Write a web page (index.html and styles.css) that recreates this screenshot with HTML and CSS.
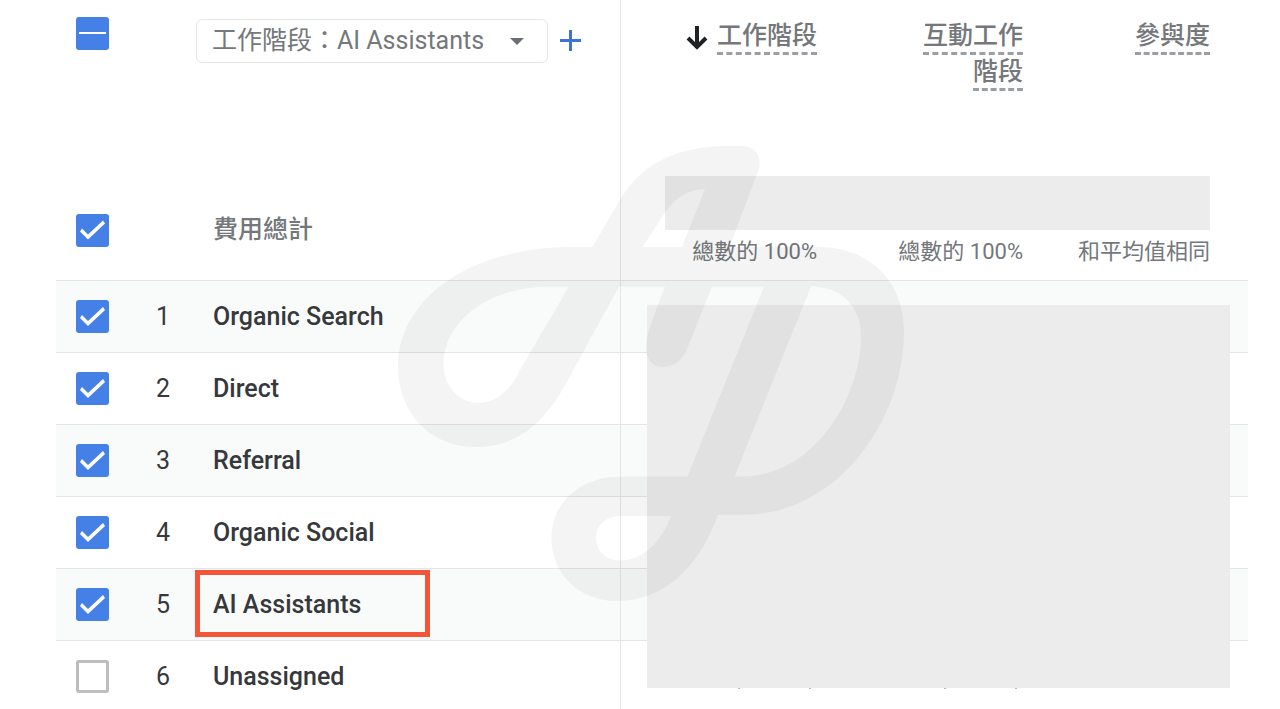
FILE: index.html
```html
<!DOCTYPE html>
<html lang="zh-Hant">
<head>
    <meta charset="UTF-8">
    <meta name="viewport" content="width=device-width, initial-scale=1.0">
    <title>工作階段</title>
    <link rel="stylesheet" href="styles.css">
</head>
<body>
    <div class="report">
        <table class="report-table">
            <colgroup>
                <col class="col-check">
                <col class="col-index">
                <col class="col-name">
                <col class="col-sessions">
                <col class="col-engaged">
                <col>
            </colgroup>
            <thead>
                <tr class="head-row">
                    <th class="check"><input type="checkbox" class="checkbox partial" aria-label="全選"></th>
                    <th colspan="2">
                        <div class="dimension">
                            <div class="select-box">
                                <select class="dimension-select" aria-label="維度">
                                    <option>工作階段：AI Assistants</option>
                                </select>
                                <svg class="caret" width="14" height="8" viewBox="0 0 14 8"><path d="M0 0h14L7 7z" fill="#6b6f74"/></svg>
                            </div>
                            <button type="button" class="add-button" aria-label="新增">
                                <svg width="21" height="21" viewBox="0 0 21 21"><path d="M10.500 0v21M0 10.500h21" stroke="#3b73d9" stroke-width="3"/></svg>
                            </button>
                        </div>
                    </th>
                    <th class="metric divider">
                        <div class="metric-head">
                            <svg class="sort-arrow" width="22" height="24" viewBox="0 0 22 24"><path d="M11 0v21M2 12l9 9 9-9" fill="none" stroke="#202124" stroke-width="4"/></svg>
                            <div class="metric-title"><span>工作階段</span></div>
                        </div>
                    </th>
                    <th class="metric">
                        <div class="metric-head">
                            <div class="metric-title"><span>互動工作階段</span></div>
                        </div>
                    </th>
                    <th class="metric">
                        <div class="metric-head">
                            <div class="metric-title"><span>參與度</span></div>
                        </div>
                    </th>
                </tr>
            </thead>
            <tbody>
                <tr class="total-row">
                    <td class="check"><input type="checkbox" class="checkbox" id="row-total" checked></td>
                    <td></td>
                    <td class="name"><label for="row-total">費用總計</label></td>
                    <td class="metric divider">總數的 100%</td>
                    <td class="metric">總數的 100%</td>
                    <td class="metric">和平均值相同</td>
                </tr>
                <tr class="channel-row">
                    <td class="check"><input type="checkbox" class="checkbox" id="row-1" checked></td>
                    <td class="index">1</td>
                    <td class="name"><label for="row-1">Organic Search</label></td>
                    <td class="divider"></td>
                    <td></td>
                    <td></td>
                </tr>
                <tr class="channel-row">
                    <td class="check"><input type="checkbox" class="checkbox" id="row-2" checked></td>
                    <td class="index">2</td>
                    <td class="name"><label for="row-2">Direct</label></td>
                    <td class="divider"></td>
                    <td></td>
                    <td></td>
                </tr>
                <tr class="channel-row">
                    <td class="check"><input type="checkbox" class="checkbox" id="row-3" checked></td>
                    <td class="index">3</td>
                    <td class="name"><label for="row-3">Referral</label></td>
                    <td class="divider"></td>
                    <td></td>
                    <td></td>
                </tr>
                <tr class="channel-row">
                    <td class="check"><input type="checkbox" class="checkbox" id="row-4" checked></td>
                    <td class="index">4</td>
                    <td class="name"><label for="row-4">Organic Social</label></td>
                    <td class="divider"></td>
                    <td></td>
                    <td></td>
                </tr>
                <tr class="channel-row">
                    <td class="check"><input type="checkbox" class="checkbox" id="row-5" checked></td>
                    <td class="index">5</td>
                    <td class="name highlight"><label for="row-5">AI Assistants</label></td>
                    <td class="divider"></td>
                    <td></td>
                    <td></td>
                </tr>
                <tr class="channel-row">
                    <td class="check"><input type="checkbox" class="checkbox" id="row-6"></td>
                    <td class="index">6</td>
                    <td class="name"><label for="row-6">Unassigned</label></td>
                    <td class="divider"></td>
                    <td></td>
                    <td></td>
                </tr>
            </tbody>
        </table>

        <!-- Blocks that hide the figures -->
        <div class="mask mask-total"></div>
        <div class="mask mask-rows">
            <svg class="specks" width="284" height="2" viewBox="0 0 284 2"><path d="M0 0h2v1h-2zM71 0h2v1h-2zM206 0h2v1h-2zM277 0h2v1h-2z" fill="#b5b7b9"/></svg>
        </div>

        <svg class="watermark" width="506" height="456" viewBox="398 146 506 456">
            <path fill-rule="evenodd" d="M573 247H592.500L620 200C642 163 676 146 731 146H742C754 146 762 155 759 168L757 174L729.500 247H817C872 247 904 283 904 332C904 420 838 515 742 515H718C698 570 662 601 617 601C579 601 551.500 574 551.500 538C551.500 502 581 476.500 621 476.500H687.500L764 286.500H712L686.500 350C682 361 673 367 662 367C652 367 646 358 646 348C646 337 648 331 665 286.500H619L564 387C540 429 512 447 475 447C430 447 398 412 398 367C398 300 468 247 573 247Z
                M569 286.500H549C491 286.500 443.500 320 443.500 364C443.500 386 459 403 478 403C494 403 509 393 520 370Z
                M705 189C686 189 672 201 662 217L642.500 247H682Z
                M811 286.500L734.500 476.500H742C815 476.500 861 396 861 336C861 306 841 286.500 811 286.500Z
                M671 516H621C606 516 596 525 596 538C596 551 606 560.500 620 560.500C643 560.500 661 542 671 516Z"/>
        </svg>
    </div>
</body>
</html>
```
FILE: styles.css
```css
*,
*::before,
*::after {
    box-sizing: border-box;
}
body {
    margin: 0;
    height: 100vh;
    overflow: hidden;
    background-color: #fff;
    color: #36383b;
    font-family: Roboto, "Noto Sans CJK TC", sans-serif;
    font-size: 25px;
    line-height: 36px;
}
.report {
    position: relative;
    padding: 0 32px 0 56px;
}
.report-table {
    width: 100%;
    table-layout: fixed;
    border-collapse: separate;
    border-spacing: 0;
}
.col-check {
    width: 73px;
}
.col-index {
    width: 68px;
}
.col-name {
    width: 423px;
}
.col-sessions {
    width: 235px;
}
.col-engaged {
    width: 206px;
}
th,
td {
    padding: 0;
    font-weight: 400;
    text-align: left;
}
.divider {
    border-left: 1px solid #e3e5e6;
}

/* header */
.head-row th {
    height: 180px;
    vertical-align: top;
}
.head-row .check {
    padding-top: 17px;
}
.dimension {
    display: flex;
    align-items: center;
    gap: 12px;
    padding: 19px 0 0 67px;
}
.select-box {
    position: relative;
    width: 352px;
}
.dimension-select {
    display: block;
    width: 100%;
    height: 44px;
    padding: 0 48px 0 15px;
    border: 1px solid #e3e5e6;
    border-radius: 6px;
    background-color: transparent;
    color: #74777b;
    font: inherit;
    appearance: none;
}
.caret {
    position: absolute;
    top: 19px;
    right: 24px;
    pointer-events: none;
}
.add-button {
    display: flex;
    padding: 0 0 2px;
    border: 0;
    background: none;
    cursor: pointer;
}
.metric {
    padding-right: 38px;
    text-align: right;
}
.metric-head {
    display: flex;
    justify-content: flex-end;
    gap: 9px;
    padding-top: 18px;
    color: #74777b;
    font-weight: 500;
}
.metric-title {
    max-width: 100px;
}
.metric-title span {
    padding-bottom: 2px;
    border-bottom: 3px dashed #9b9ea2;
    box-decoration-break: clone;
    -webkit-box-decoration-break: clone;
}
.sort-arrow {
    margin-top: 8px;
}

/* rows */
.total-row td {
    height: 101px;
    border-bottom: 1px solid #e3e5e6;
}
.total-row .name {
    color: #74777b;
    font-weight: 500;
}
.total-row .metric {
    padding-top: 44px;
    color: #74777b;
    font-size: 22px;
}
.channel-row td {
    height: 72px;
    border-bottom: 1px solid #e3e5e6;
}
.channel-row:nth-child(even) {
    background-color: #f9fbfa;
}
.check {
    padding-left: 20px;
}
.index {
    text-align: center;
}
.name {
    padding-left: 16px;
    font-weight: 500;
}
.highlight {
    position: relative;
}
.highlight::after {
    content: "";
    position: absolute;
    top: 1px;
    left: -2px;
    width: 235px;
    height: 67px;
    border: 5px solid #f25537;
}

.checkbox {
    display: block;
    width: 33px;
    height: 33px;
    margin: 0;
    border: 3px solid #bdbdbd;
    border-radius: 3px;
    background-color: #fff;
    appearance: none;
}
.checkbox:checked,
.checkbox.partial {
    border: 0;
    background-color: #4580e6;
}
.checkbox:checked::before {
    content: "";
    display: block;
    width: 33px;
    height: 33px;
    background-color: #fff;
    clip-path: polygon(4px 18px, 6px 15px, 12px 21px, 27px 7px, 29px 10px, 12px 26px);
}
.checkbox.partial {
    padding: 15px 3px 0;
}
.checkbox.partial::before {
    content: "";
    display: block;
    height: 2px;
    background-color: #fff;
}

/* overlays */
.mask {
    position: absolute;
    background-color: #ececec;
}
.mask-total {
    top: 176px;
    right: 70px;
    left: 665px;
    height: 54px;
}
.mask-rows {
    top: 305px;
    right: 50px;
    left: 647px;
    height: 383px;
}
.specks {
    position: absolute;
    top: 383px;
    left: 91px;
}
.watermark {
    position: absolute;
    top: 146px;
    left: 398px;
    fill: #000;
    opacity: 0.04;
    pointer-events: none;
}
```
